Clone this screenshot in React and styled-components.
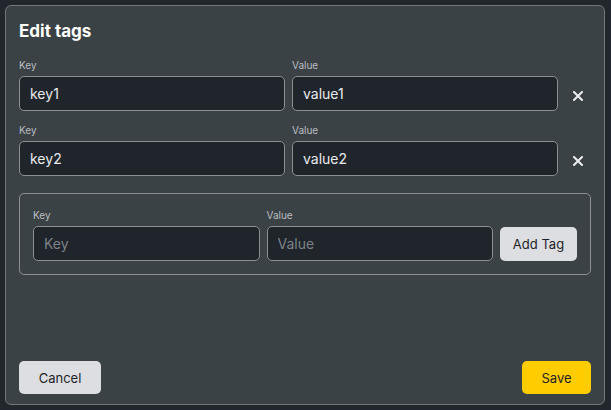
import React from 'react';
import styled, { createGlobalStyle } from 'styled-components';

const GlobalStyle = createGlobalStyle`
  html, body {
    margin: 0;
    padding: 0;
    background: #22262d;
    font-family: Inter, "Noto Sans", sans-serif;
  }
`;

const tags = [
    { key: 'key1', value: 'value1' },
    { key: 'key2', value: 'value2' },
];

const App = () => {
    return (
        <>
            <GlobalStyle />
            <Modal>
                <Title>Edit tags</Title>
                <TagList>
                    {tags.map((tag) => (
                        <TagRow key={tag.key}>
                            <Field>
                                <Label>Key</Label>
                                <Input defaultValue={tag.key} />
                            </Field>
                            <Field>
                                <Label>Value</Label>
                                <Input defaultValue={tag.value} />
                            </Field>
                            <RemoveButton aria-label="Remove tag">
                                <svg width="10" height="10" viewBox="0 0 10 10">
                                    <path d="M1 1L9 9M9 1L1 9" stroke="#eceef0" strokeWidth="2" strokeLinecap="square" />
                                </svg>
                            </RemoveButton>
                        </TagRow>
                    ))}
                </TagList>

                <AddBox>
                    <AddRow>
                        <Field>
                            <Label>Key</Label>
                            <Input placeholder="Key" />
                        </Field>
                        <Field>
                            <Label>Value</Label>
                            <Input placeholder="Value" />
                        </Field>
                        <Button>Add Tag</Button>
                    </AddRow>
                </AddBox>

                <Footer>
                    <Button $wide>Cancel</Button>
                    <Button $primary>Save</Button>
                </Footer>
            </Modal>
        </>
    );
};

const Modal = styled.div`
  box-sizing: border-box;
  margin: 5px;
  width: 600px;
  height: 400px;
  padding: 13px 13px 10px 13px;
  background: #3b4245;
  border: 1px solid #72777b;
  border-radius: 6px;
  display: flex;
  flex-direction: column;
`;

const Title = styled.h2`
  margin: 0 0 15px 0;
  font-size: 17px;
  line-height: 24px;
  font-weight: 700;
  color: #ffffff;
`;

const TagList = styled.div`
  display: flex;
  flex-direction: column;
  gap: 12px;
`;

const TagRow = styled.div`
  display: grid;
  grid-template-columns: 266px 266px 25px;
  column-gap: 7px;
  align-items: end;
`;

const Field = styled.div`
  display: flex;
  flex-direction: column;
  gap: 4px;
  min-width: 0;
`;

const Label = styled.label`
  font-size: 10px;
  line-height: 14px;
  color: #b9bdc1;
`;

const Input = styled.input`
  box-sizing: border-box;
  width: 100%;
  height: 35px;
  padding: 0 10px;
  background: #1f252b;
  border: 1px solid #8b9094;
  border-radius: 5px;
  color: #e9ebee;
  font-family: Inter, "Noto Sans", sans-serif;
  font-size: 14px;
  outline: none;

  &::placeholder {
    color: #7c8288;
  }
`;

const RemoveButton = styled.button`
  height: 35px;
  padding: 4px 0 0 0;
  background: none;
  border: none;
  display: flex;
  align-items: center;
  justify-content: center;
  cursor: pointer;
`;

const AddBox = styled.div`
  margin-top: 17px;
  padding: 14px 13px 13px 13px;
  border: 1px solid #8b9094;
  border-radius: 5px;
`;

const AddRow = styled.div`
  display: grid;
  grid-template-columns: 1fr 1fr 77px;
  column-gap: 7px;
  align-items: end;
`;

const Button = styled.button`
  box-sizing: border-box;
  height: ${(p) => (p.$primary || p.$wide ? '33px' : '34px')};
  width: ${(p) => (p.$wide ? '82px' : p.$primary ? '69px' : 'auto')};
  padding: 0 10px;
  background: ${(p) => (p.$primary ? '#ffcc00' : '#dcdee1')};
  color: #1f2328;
  border: none;
  border-radius: 5px;
  font-family: Inter, "Noto Sans", sans-serif;
  font-size: 13px;
  cursor: pointer;
`;

const Footer = styled.div`
  margin-top: auto;
  display: flex;
  justify-content: space-between;
`;

export default App;
